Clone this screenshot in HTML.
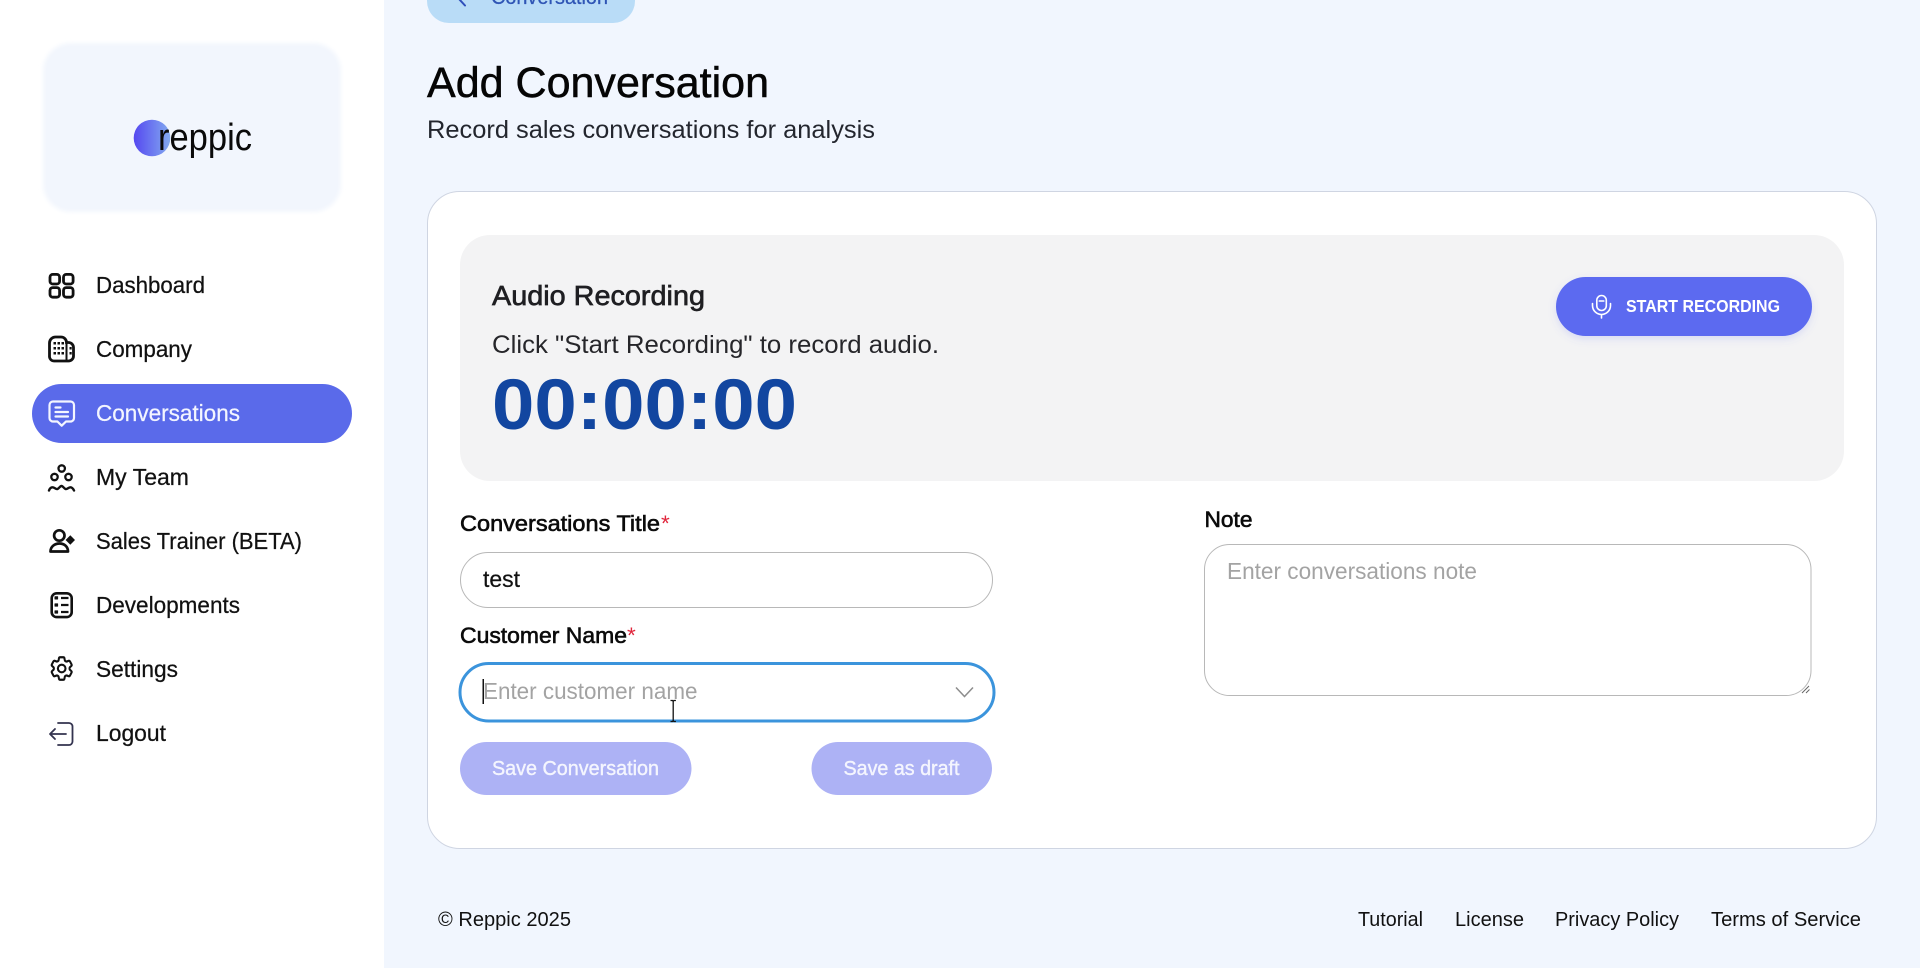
<!DOCTYPE html>
<html lang="en"><head><meta charset="utf-8"><title>Add Conversation</title>
<style>
html,body{margin:0;padding:0;width:1920px;height:968px;overflow:hidden;background:#f1f6fe}
svg{display:block;position:absolute;left:0;top:0}
text{font-family:"Liberation Sans",sans-serif;white-space:pre}
.n{font-size:23.5px;fill:#111;stroke:#111;stroke-width:.25px}
.l{font-size:22.5px;fill:#0b0b0b;stroke:#0b0b0b;stroke-width:.6px}
.f{font-size:20px;fill:#111}
.ph{font-size:23px;fill:#a3a3a3}
.b{font-size:20.5px;fill:#f4f5fe;stroke:#f4f5fe;stroke-width:.4px}
</style></head><body>
<svg width="1920" height="968" viewBox="0 0 1920 968" xmlns="http://www.w3.org/2000/svg">
<defs>
<linearGradient id="g" x1="0" x2="1" y1="0" y2="0"><stop offset="0" stop-color="#5548f0"/><stop offset="1" stop-color="#83aaf0"/></linearGradient>
<filter id="s1" x="-10%" y="-30%" width="120%" height="170%"><feDropShadow dx="0" dy="3" stdDeviation="4" flood-color="#5b6bf0" flood-opacity=".18"/></filter>
<filter id="s2" x="-10%" y="-10%" width="120%" height="120%"><feGaussianBlur stdDeviation="2"/></filter>
</defs>
<rect width="1920" height="968" fill="#f1f6fe"/>
<rect width="384" height="968" fill="#fff"/>
<!-- logo -->
<rect x="43" y="43" width="298" height="169" rx="28" fill="#f2f6fd" filter="url(#s2)"/>
<circle cx="152" cy="138" r="18.3" fill="url(#g)"/>
<text x="158" y="150" font-size="38" fill="#0a0a0a" textLength="94" lengthAdjust="spacingAndGlyphs">reppic</text>
<!-- nav -->
<rect x="32" y="384" width="320" height="59" rx="29.5" fill="#5a6aea"/>
<text class="n" x="96" y="293" textLength="109" lengthAdjust="spacingAndGlyphs">Dashboard</text>
<text class="n" x="96" y="357" textLength="96" lengthAdjust="spacingAndGlyphs">Company</text>
<text class="n" x="96" y="421" textLength="144" lengthAdjust="spacingAndGlyphs" style="fill:#f3f5ff;stroke:#f3f5ff">Conversations</text>
<text class="n" x="96" y="485" textLength="93" lengthAdjust="spacingAndGlyphs">My Team</text>
<text class="n" x="96" y="549" textLength="206" lengthAdjust="spacingAndGlyphs">Sales Trainer (BETA)</text>
<text class="n" x="96" y="613" textLength="144" lengthAdjust="spacingAndGlyphs">Developments</text>
<text class="n" x="96" y="677" textLength="82" lengthAdjust="spacingAndGlyphs">Settings</text>
<text class="n" x="96" y="741" textLength="70" lengthAdjust="spacingAndGlyphs">Logout</text>
<!-- icons -->
<g fill="none" stroke="#111" stroke-width="2.8">
<rect x="50" y="274.400" width="9.600" height="9.600" rx="2.800"/><rect x="63.500" y="274.400" width="9.600" height="9.600" rx="2.800"/>
<rect x="50" y="287.600" width="9.600" height="9.600" rx="2.800"/><rect x="63.500" y="287.600" width="9.600" height="9.600" rx="2.800"/>
<path d="M49.500 357V343a6 6 0 0 1 6-6h5.500a5.500 5.500 0 0 1 5.500 5.500h2a5 5 0 0 1 5 5V356a5 5 0 0 1-5 5H54a4.500 4.500 0 0 1-4.500-4z"/>
<path d="M66.500 342v19" stroke-width="2"/>
</g>
<g fill="#111">
<rect x="53.500" y="342" width="2.500" height="2.500"/><rect x="57.500" y="342" width="2.500" height="2.500"/><rect x="61.500" y="342" width="2.500" height="2.500"/>
<rect x="53.500" y="347" width="2.500" height="2.500"/><rect x="57.500" y="347" width="2.500" height="2.500"/><rect x="61.500" y="347" width="2.500" height="2.500"/>
<rect x="53.500" y="352" width="2.500" height="2.500"/><rect x="57.500" y="352" width="2.500" height="2.500"/><rect x="61.500" y="352" width="2.500" height="2.500"/>
<rect x="69.500" y="347" width="2.200" height="2.500"/><rect x="69.500" y="352" width="2.200" height="2.500"/>
</g>
<g fill="none" stroke="#f4f6ff" stroke-width="2.200" stroke-linecap="round" stroke-linejoin="round">
<path d="M53 401.500h17.500a3.500 3.500 0 0 1 3.500 3.500v13a3.500 3.500 0 0 1-3.500 3.500h-4.500l-4.300 4.200-4.300-4.200H53a3.500 3.500 0 0 1-3.500-3.500v-13a3.500 3.500 0 0 1 3.500-3.500z"/>
<path d="M55.500 407.500h5M55.500 412h12.500M55.500 416.500h12.500"/>
</g>
<g fill="none" stroke="#111" stroke-width="2.300" stroke-linecap="round" stroke-linejoin="round">
<circle cx="61.700" cy="468.500" r="3.200"/><circle cx="54.500" cy="477" r="3.200"/><circle cx="68.500" cy="477" r="3.200"/>
<path d="M49 490.500c1-3 3-3.500 4.500-3 1.500.5 2.500 2 4 1.500 1.500-.5 2.500-3 4-3s2.500 2.500 4 3 2.500-1 4-1.500 3 0 4.500 3" stroke-width="2.400"/>
<circle cx="59.300" cy="535.500" r="5.200" stroke-width="2.700"/>
<path d="M50.500 551.500c0-5 4.300-8 9-8s8.500 3 8.500 8z" stroke-width="2.700"/>
<rect x="51.700" y="593.300" width="20" height="23.800" rx="5" stroke-width="2.600"/>
<path d="M61 598h7.500M61 605h7.500M61 612h7.500" stroke-width="2.300" stroke-linecap="butt"/>
</g>
<path d="M75 540l-4.700-4.700-4.700 4.700 4.700 4.700z" fill="#111"/>
<rect x="54.500" y="596.300" width="3.600" height="3.200" fill="#111" rx=".5"/><rect x="54.500" y="603.400" width="3.600" height="3.200" fill="#111" rx=".5"/><rect x="54.500" y="610.400" width="3.600" height="3.200" fill="#111" rx=".5"/>
<circle cx="61.700" cy="668.500" r="3.800" fill="none" stroke="#111" stroke-width="2.100"/>
<path transform="translate(61.700 668.500) scale(1.16 1.25) translate(-12 -12)" fill="none" stroke="#111" stroke-width="1.750" stroke-linejoin="round" d="M9.594 3.94c.09-.542.56-.94 1.11-.94h2.593c.55 0 1.02.398 1.11.94l.213 1.281c.063.374.313.686.645.87.074.04.147.083.22.127.325.196.72.257 1.075.124l1.217-.456a1.125 1.125 0 0 1 1.37.49l1.296 2.247a1.125 1.125 0 0 1-.26 1.431l-1.003.827c-.293.241-.438.613-.43.992a7.723 7.723 0 0 1 0 .255c-.008.378.137.75.43.991l1.004.827c.424.35.534.955.26 1.43l-1.298 2.247a1.125 1.125 0 0 1-1.369.491l-1.217-.456c-.355-.133-.75-.072-1.076.124a6.47 6.47 0 0 1-.22.128c-.331.183-.581.495-.644.869l-.213 1.281c-.09.543-.56.94-1.11.94h-2.594c-.55 0-1.019-.398-1.11-.94l-.213-1.281c-.062-.374-.312-.686-.644-.87a6.52 6.52 0 0 1-.22-.127c-.325-.196-.72-.257-1.076-.124l-1.217.456a1.125 1.125 0 0 1-1.369-.49l-1.297-2.247a1.125 1.125 0 0 1 .26-1.431l1.004-.827c.292-.24.437-.613.43-.991a6.932 6.932 0 0 1 0-.255c.007-.38-.138-.751-.43-.992l-1.004-.827a1.125 1.125 0 0 1-.26-1.43l1.297-2.247a1.125 1.125 0 0 1 1.37-.491l1.216.456c.356.133.751.072 1.076-.124.072-.044.146-.086.22-.128.332-.183.582-.495.644-.869l.214-1.28Z"/>
<path d="M58 723h11a3.500 3.500 0 0 1 3.500 3.500v15a3.500 3.500 0 0 1-3.500 3.500h-11M66 734H50.500M55 729l-5 5 5 5" fill="none" stroke="#33334f" stroke-width="1.800" stroke-linecap="round" stroke-linejoin="round"/>
<!-- back btn -->
<path d="M427 0h208v1a22 22 0 0 1-22 22H449a22 22 0 0 1-22-22z" fill="#b9dcf7"/>
<path d="M465 5.500l-6-6.500" fill="none" stroke="#2f4fbb" stroke-width="2" stroke-linecap="round"/>
<text x="491" y="4" font-size="21" fill="#2f55b5" stroke="#2f55b5" stroke-width=".25" textLength="117" lengthAdjust="spacingAndGlyphs">Conversation</text>
<!-- heading -->
<text x="427" y="97" font-size="42.5" fill="#050505" stroke="#050505" stroke-width=".5" textLength="342" lengthAdjust="spacingAndGlyphs">Add Conversation</text>
<text x="427" y="138" font-size="25" fill="#23262e" textLength="448" lengthAdjust="spacingAndGlyphs">Record sales conversations for analysis</text>
<!-- card -->
<rect x="427.500" y="191.500" width="1449" height="657" rx="32" fill="#fff" stroke="#cfd5e2"/>
<rect x="460" y="235" width="1384" height="246" rx="30" fill="#f3f3f4"/>
<text x="492" y="305" font-size="27.5" fill="#1f1f22" stroke="#1f1f22" stroke-width=".65" textLength="213" lengthAdjust="spacingAndGlyphs">Audio Recording</text>
<text x="492" y="353" font-size="25" fill="#26262a" textLength="447" lengthAdjust="spacingAndGlyphs">Click "Start Recording" to record audio.</text>
<text x="492" y="429" font-size="71" font-weight="700" fill="#1246a0" textLength="305" lengthAdjust="spacingAndGlyphs">00:00:00</text>
<!-- record btn -->
<rect x="1556" y="277" width="256" height="59" rx="29.500" fill="#5b6bf0" filter="url(#s1)"/>
<g fill="none" stroke="#fff" stroke-width="1.600" stroke-linecap="round">
<rect x="1596.800" y="295.500" width="9.500" height="15" rx="4.750"/>
<path d="M1592.500 303.500v2a9 9 0 0 0 18 0v-2M1601.500 314.500v3.500M1599.300 301h4.500"/>
</g>
<text x="1626" y="312" font-size="17.5" font-weight="700" fill="#fff" textLength="154" lengthAdjust="spacingAndGlyphs">START RECORDING</text>
<!-- left form -->
<text class="l" x="460" y="531" textLength="200" lengthAdjust="spacingAndGlyphs">Conversations Title</text>
<text x="661" y="531" font-size="22.5" fill="#e0263c">*</text>
<rect x="460.500" y="552.500" width="532" height="55" rx="27.500" fill="#fff" stroke="#b8b8b8"/>
<text x="483" y="587" font-size="23" fill="#111" stroke="#111" stroke-width=".2" textLength="37" lengthAdjust="spacingAndGlyphs">test</text>
<text class="l" x="460" y="643" textLength="167" lengthAdjust="spacingAndGlyphs">Customer Name</text>
<text x="627" y="643" font-size="22.5" fill="#e0263c">*</text>
<rect x="460" y="663.500" width="534" height="57.500" rx="28.700" fill="#fff" stroke="#3b94dc" stroke-width="3"/>
<text class="ph" x="483" y="699" textLength="214.500" lengthAdjust="spacingAndGlyphs">Enter customer name</text>
<rect x="482.500" y="679" width="1.500" height="25" fill="#111"/>
<path d="M956 687.500l8.500 9 8.500-9" fill="none" stroke="#8d8d8d" stroke-width="1.500"/>
<path d="M670.500 700.500h2l.7.900.7-.9h2M673.200 701.500v19M670.500 721.500h2l.7-.9.7.9h2" fill="none" stroke="#111" stroke-width="1.300"/>
<rect x="460" y="742" width="231.500" height="53" rx="26.500" fill="#adb2f5"/>
<rect x="811.500" y="742" width="180.500" height="53" rx="26.500" fill="#adb2f5"/>
<text class="b" x="492" y="775" textLength="167" lengthAdjust="spacingAndGlyphs">Save Conversation</text>
<text class="b" x="843.500" y="775" textLength="116" lengthAdjust="spacingAndGlyphs">Save as draft</text>
<!-- right form -->
<text class="l" x="1204.500" y="527" textLength="48" lengthAdjust="spacingAndGlyphs">Note</text>
<rect x="1204.500" y="544.500" width="606.500" height="151" rx="25" fill="#fff" stroke="#b8b8b8"/>
<text class="ph" x="1227" y="579" textLength="250" lengthAdjust="spacingAndGlyphs">Enter conversations note</text>
<path d="M1802 693l7-7M1806 693l3.500-3.500" stroke="#666" stroke-width="1"/>
<!-- footer -->
<text class="f" x="438" y="926" textLength="133" lengthAdjust="spacingAndGlyphs">© Reppic 2025</text>
<text class="f" x="1358" y="926" textLength="65" lengthAdjust="spacingAndGlyphs">Tutorial</text>
<text class="f" x="1455" y="926" textLength="69" lengthAdjust="spacingAndGlyphs">License</text>
<text class="f" x="1555" y="926" textLength="124" lengthAdjust="spacingAndGlyphs">Privacy Policy</text>
<text class="f" x="1711" y="926" textLength="150" lengthAdjust="spacingAndGlyphs">Terms of Service</text>
</svg>
</body></html>
